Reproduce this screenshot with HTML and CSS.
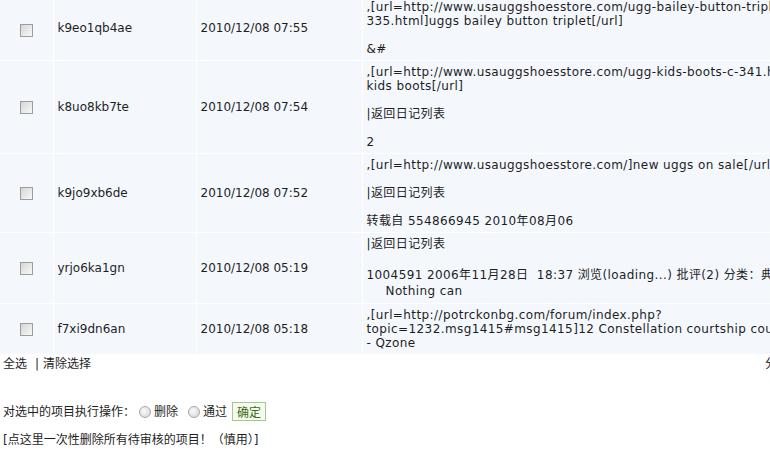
FILE: index.html
```html
<!DOCTYPE html>
<html lang="zh-CN">
<head>
    <meta charset="UTF-8">
    <title>待审核评论</title>
    <link rel="stylesheet" href="styles.css">
</head>
<body>
    <table class="list">
        <colgroup>
            <col class="col-check">
            <col class="col-name">
            <col class="col-date">
            <col class="col-body">
        </colgroup>
        <tr class="first">
            <td class="check"><input type="checkbox"></td>
            <td>k9eo1qb4ae</td>
            <td>2010/12/08 07:55</td>
            <td class="body">
                <p>,[url=http://www.usauggshoesstore.com/ugg-bailey-button-triplet-c-<br>335.html]uggs bailey button triplet[/url]</p>
                <p>&amp;#</p>
            </td>
        </tr>
        <tr>
            <td class="check"><input type="checkbox"></td>
            <td>k8uo8kb7te</td>
            <td>2010/12/08 07:54</td>
            <td class="body">
                <p>,[url=http://www.usauggshoesstore.com/ugg-kids-boots-c-341.html]uggs<br>kids boots[/url]</p>
                <p>|返回日记列表</p>
                <p>2</p>
            </td>
        </tr>
        <tr>
            <td class="check"><input type="checkbox"></td>
            <td>k9jo9xb6de</td>
            <td>2010/12/08 07:52</td>
            <td class="body">
                <p>,[url=http://www.usauggshoesstore.com/]new uggs on sale[/url]</p>
                <p>|返回日记列表</p>
                <p>转载自 554866945 2010年08月06</p>
            </td>
        </tr>
        <tr>
            <td class="check"><input type="checkbox"></td>
            <td>yrjo6ka1gn</td>
            <td>2010/12/08 05:19</td>
            <td class="body">
                <p>|返回日记列表</p>
                <p class="loose">1004591 2006年11月28日&nbsp; 18:37 浏览(loading...) 批评(2) 分类：典藏<br><span class="indent">Nothing can</span></p>
            </td>
        </tr>
        <tr>
            <td class="check"><input type="checkbox"></td>
            <td>f7xi9dn6an</td>
            <td>2010/12/08 05:18</td>
            <td class="body">
                <p>,[url=http://potrckonbg.com/forum/index.php?<br>topic=1232.msg1415#msg1415]12 Constellation courtship course<br>- Qzone</p>
            </td>
        </tr>
    </table>

    <div class="select-bar">
        <div>
            <a href="#">全选</a><span class="sep">|</span><a href="#">清除选择</a>
        </div>
        <div>分页：</div>
    </div>

    <form class="actions">
        <span>对选中的项目执行操作：</span>
        <label><input type="radio" name="op">删除</label>
        <label><input type="radio" name="op">通过</label>
        <button type="button">确定</button>
    </form>

    <p class="danger"><a href="#">[点这里一次性删除所有待审核的项目！（慎用）]</a></p>
</body>
</html>
```

FILE: styles.css
```css
html, body {
    overflow: hidden;
}

body {
    margin: 0;
    font-family: "DejaVu Sans", "Noto Sans CJK SC", sans-serif;
    font-size: 12px;
    line-height: 14px;
    color: #1e1e1e;
    background: #fff;
}

a {
    color: #1e1e1e;
    text-decoration: none;
}

.list {
    width: 1000px;
    table-layout: fixed;
    border-collapse: collapse;
}

.col-check { width: 53px; }
.col-name { width: 143px; }
.col-date { width: 166px; }

.list td {
    background: #f4f8fd;
    border: 1px solid #fff;
    border-top: 0;
    padding: 4px;
    vertical-align: middle;
    white-space: nowrap;
}

.list tr.first td {
    padding-top: 0;
}

.list td:first-child {
    border-left: 0;
}

.list td.check {
    text-align: center;
    padding: 0;
}

.body {
    letter-spacing: 0.4px;
}

.body p {
    margin: 14px 0 0;
}

.body p:first-child {
    margin-top: 0;
}

.body p.loose {
    margin-top: 16px;
    line-height: 16px;
}

.indent {
    padding-left: 19px;
}

input[type="checkbox"] {
    appearance: none;
    width: 13px;
    height: 13px;
    margin: 0;
    border: 1px solid #9c9c9c;
    background: linear-gradient(135deg, #d6d6d6, #f8f8f8);
    vertical-align: middle;
}

.select-bar {
    display: grid;
    grid-template-columns: 762px auto;
    padding: 0 3px;
    margin-top: 2px;
    white-space: nowrap;
}

.sep {
    margin: 0 4px 0 8px;
}

.actions {
    display: flex;
    align-items: center;
    padding: 0 3px;
    margin-top: 31px;
}

.actions label {
    display: flex;
    align-items: center;
}

input[type="radio"] {
    appearance: none;
    width: 12px;
    height: 12px;
    margin: 0 3px 0 4px;
    border: 1px solid #a8a8a8;
    border-radius: 50%;
    background: radial-gradient(circle at 40% 40%, #fafafa, #d4d4d4);
}

.actions label + label input {
    margin-left: 10px;
}

.actions button {
    margin-left: 5px;
    height: 19px;
    padding: 0 4px;
    font-family: "Noto Sans CJK SC", sans-serif;
    font-size: 12px;
    color: #3d6a17;
    background: #f5fbef;
    border: 1px solid #a6c78c;
}

.danger {
    margin: 12px 0 0;
    padding: 0 3px;
}
```
